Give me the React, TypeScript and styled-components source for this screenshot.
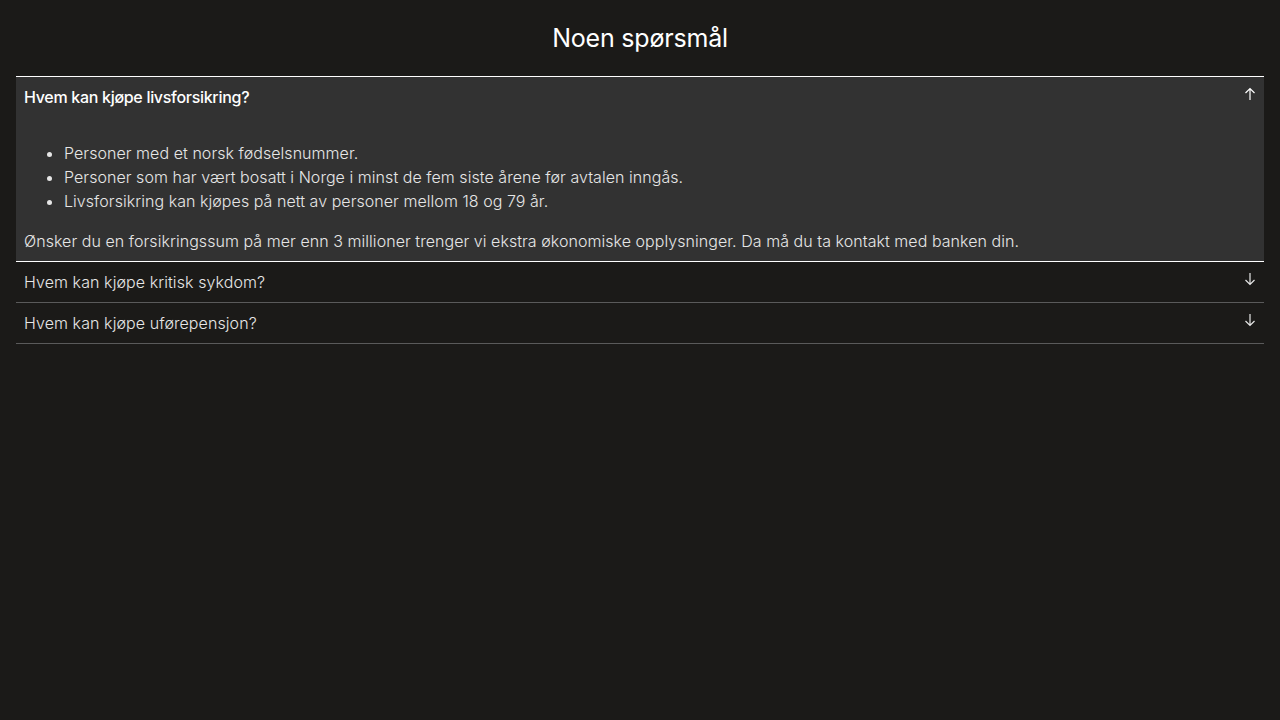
import { useState } from "react"
import styled, { createGlobalStyle } from "styled-components"

const GlobalStyle = createGlobalStyle`
    html, body {
        margin: 0;
        padding: 0;
        background: #1b1a18;
        color: #ececec;
        font-family: Inter, "Liberation Sans", sans-serif;
    }
`

interface Faq {
    question : string,
    bullets? : string[],
    text? : string
}

const faqs : Faq[] = [
    {
        question: "Hvem kan kjøpe livsforsikring?",
        bullets: [
            "Personer med et norsk fødselsnummer.",
            "Personer som har vært bosatt i Norge i minst de fem siste årene før avtalen inngås.",
            "Livsforsikring kan kjøpes på nett av personer mellom 18 og 79 år.",
        ],
        text: "Ønsker du en forsikringssum på mer enn 3 millioner trenger vi ekstra økonomiske opplysninger. Da må du ta kontakt med banken din.",
    },
    { question: "Hvem kan kjøpe kritisk sykdom?" },
    { question: "Hvem kan kjøpe uførepensjon?" },
]

const Page = styled.main`
    padding: 22px 16px;
`

const Title = styled.h2`
    margin: 0 0 22px;
    text-align: center;
    font-size: 25px;
    font-weight: 400;
    line-height: 32px;
    color: #ffffff;
    letter-spacing: -0.2px;
`

const List = styled.div`
    border-top: 1px solid #ffffff;
`

const Item = styled.div<{ $open : boolean }>`
    background: ${p => p.$open ? "#323232" : "transparent"};
    border-bottom: 1px solid ${p => p.$open ? "#ffffff" : "#5a5a5a"};
`

const Header = styled.button<{ $open : boolean }>`
    display: flex;
    justify-content: space-between;
    align-items: center;
    width: 100%;
    height: 40px;
    padding: 0 8px;
    border: none;
    background: none;
    color: ${p => p.$open ? "#ffffff" : "#e6e6e6"};
    font-family: inherit;
    font-size: 16px;
    font-weight: ${p => p.$open ? 500 : 300};
    letter-spacing: ${p => p.$open ? "-0.3px" : "0.08px"};
    text-align: left;
    cursor: pointer;
`

const Arrow = styled.svg`
    width: 12px;
    height: 14px;
    margin-top: -6px;
    flex-shrink: 0;
`

const Content = styled.div`
    padding: 24px 8px 8px;
    font-size: 16px;
    font-weight: 300;
    line-height: 24px;
    letter-spacing: 0.05px;
    color: #e6e6e6;
`

const Bullets = styled.ul`
    margin: 0 0 16px;
    padding-left: 40px;
`

const Paragraph = styled.p`
    margin: 0;
`

const ArrowIcon = ({ up } : { up : boolean }) => (
    <Arrow viewBox="0 0 12 14" fill="none" stroke="currentColor" strokeWidth="1.2">
        {up
            ? <path d="M6 13V1.5M1.5 6L6 1.5L10.5 6" />
            : <path d="M6 1v11.5M1.5 8L6 12.5L10.5 8" />}
    </Arrow>
)

const App = () => {
    const [open, setOpen] = useState<number | null>(0)

    return <>
        <GlobalStyle />
        <Page>
            <Title>Noen spørsmål</Title>
            <List>
                { faqs.map((faq, i) => (
                    <Item key={faq.question} $open={open === i}>
                        <Header $open={open === i} onClick={() => setOpen(open === i ? null : i)}>
                            {faq.question}
                            <ArrowIcon up={open === i} />
                        </Header>
                        { open === i && (
                            <Content>
                                <Bullets>
                                    { faq.bullets?.map(b => <li key={b}>{b}</li>) }
                                </Bullets>
                                <Paragraph>{faq.text}</Paragraph>
                            </Content>
                        )}
                    </Item>
                ))}
            </List>
        </Page>
    </>
}

export default App
